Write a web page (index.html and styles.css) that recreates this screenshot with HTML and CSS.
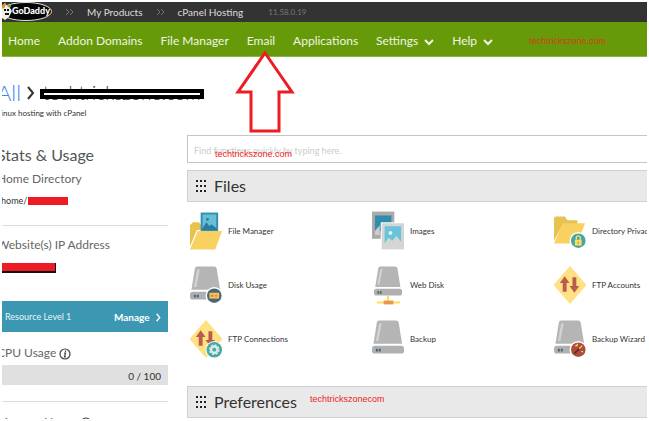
FILE: index.html
```html
<!DOCTYPE html>
<html lang="en">
<head>
<meta charset="utf-8">
<title>cPanel Hosting</title>
<link rel="stylesheet" href="styles.css">
</head>
<body>
<svg class="defs" aria-hidden="true">
  <symbol id="drive" viewBox="0 0 34 40">
    <path d="M7 1H25Q27 1 27.500 3L31 25H1.500L5 3Q5.500 1 7 1Z" fill="#b5b5b5"/>
    <path d="M7.500 4H10L6.500 22H4Z" fill="#d3d3d3"/>
    <rect x="0" y="27" width="33" height="8" rx="3" fill="#b0b0b0"/>
    <path d="M4 30h2v3h-2zM7 30h2v3h-2z" fill="#456477"/>
  </symbol>
  <symbol id="arrows" viewBox="0 0 34 40">
    <path d="M16.500 1 33 20 16.500 39 0 20Z" fill="#ffe082" stroke="#ffe082" stroke-linejoin="round"/>
    <path d="M11 11 16 18H13V27H9V18H6ZM19 12H23V21H26L21 28 16 21H19Z" fill="#b85c4c"/>
  </symbol>
  <symbol id="chevron-down" viewBox="0 0 10 8"><path d="M1 2 5 6 9 2" fill="none" stroke="currentColor" stroke-width="2"/></symbol>
  <symbol id="chevron-right" viewBox="0 0 8 14"><path d="M1 1 6 7 1 13" fill="none" stroke="currentColor" stroke-width="2"/></symbol>
  <symbol id="grip" viewBox="0 0 10 12"><path d="M0 0h2v2H0zM4 0h2v2H4zM8 0h2v2H8zM0 5h2v2H0zM4 5h2v2H4zM8 5h2v2H8zM0 10h2v2H0zM4 10h2v2H4zM8 10h2v2H8z" fill="#222"/></symbol>
  <symbol id="info" viewBox="0 0 12 12"><circle cx="6" cy="6" r="5" fill="none" stroke="#444" stroke-width="1.200"/><path d="M6.500 2.500v1.500M5 5h1.500L5.500 9H7" fill="none" stroke="#444" stroke-width="1.200"/></symbol>
</svg>
<div class="frame">
  <header>
    <div class="topbar">
      <a class="logo" href="#"><svg viewBox="0 0 52 20" aria-hidden="true">
        <ellipse cx="24" cy="9.500" rx="25.500" ry="9" fill="#050505" stroke="#ddd"/>
        <path d="M0 4 3 1 5 4 9 2 8 6 10 9 7 15 3 18 0 16Z" fill="#eee"/>
        <path d="M0 3 4 1 3 5 0 7Z" fill="#e58a1c"/>
        <path d="M5 4 9 2 8 6Z" fill="#6fae22"/>
        <path d="M2 8h2M5 8h2M3 12h4" stroke="#111" stroke-width="2"/>
      </svg><span>GoDaddy</span></a>
      <svg class="double" viewBox="0 0 9 8" aria-hidden="true"><path d="M1 1 4 4 1 7M5 1 8 4 5 7"/></svg>
      <a href="#">My Products</a>
      <svg class="double" viewBox="0 0 9 8" aria-hidden="true"><path d="M1 1 4 4 1 7M5 1 8 4 5 7"/></svg>
      <a href="#">cPanel Hosting</a>
      <span class="version">11.58.0.19</span>
    </div>
    <nav class="menu">
      <a href="#">Home</a>
      <a href="#">Addon Domains</a>
      <a href="#">File Manager</a>
      <a href="#">Email</a>
      <a href="#">Applications</a>
      <a href="#">Settings <svg><use href="#chevron-down"/></svg></a>
      <a href="#">Help <svg><use href="#chevron-down"/></svg></a>
    </nav>
  </header>
  <div class="heading">
    <h1><a href="#">All</a><svg><use href="#chevron-right"/></svg><span class="struck">techtrickszone.com</span></h1>
    <p>Linux hosting with cPanel</p>
  </div>
  <div class="columns">
    <aside>
      <h2>Stats &amp; Usage</h2>
      <h3>Home Directory</h3>
      <p class="path">/home/<span class="redacted"></span></p>
      <hr>
      <h3>Website(s) IP Address</h3>
      <p><span class="redacted address"></span></p>
      <a class="resource" href="#"><span>Resource Level 1</span><strong>Manage <svg><use href="#chevron-right"/></svg></strong></a>
      <h3>CPU Usage <svg><use href="#info"/></svg></h3>
      <div class="meter">0 / 100</div>
      <hr>
      <h3>Memory Usage <svg><use href="#info"/></svg></h3>
    </aside>
    <main>
      <input class="search" type="text" aria-label="Find functions" placeholder="Find functions quickly by typing here.">
      <h2 class="panel"><svg><use href="#grip"/></svg>Files</h2>
      <div class="apps">
        <a href="#"><svg viewBox="0 0 34 40"><path d="M0 36V14L3 11H9L12 14H28V19H7Z" fill="#e8c251"/><path d="M11 1H29V21H11Z" fill="#358ead"/><path d="M13 3H27V17H13Z" fill="#67bfd6"/><path d="M13 17 17 11 20 15 22 13 27 17V19H13Z" fill="#287c9d"/><circle cx="18" cy="8" r="1.500" fill="#287c9d"/><path d="M8 20H33L26 39H0Z" fill="#f8d160"/></svg>File Manager</a>
        <a href="#"><svg viewBox="0 0 34 40"><path d="M0 0H23V28H0Z" fill="#aaa"/><path d="M3 4H20V20H3Z" fill="#328cac"/><path d="M3 20 8 14V24H3Z" fill="#ccc"/><path d="M9 11H33V40H9Z" fill="#fff"/><path d="M10 12H33V39H10Z" fill="#d5d5d5"/><path d="M13 15H30V31L25 25 21 30 17 27 13 33Z" fill="#68c4db"/><circle cx="19" cy="22" r="2" fill="#eee"/></svg>Images</a>
        <a href="#"><svg viewBox="0 0 34 40"><path d="M0 30V7Q0 5 2 5H11L14 9H24V15H8Z" fill="#e8c251"/><path d="M9 12H32L24 33H0Z" fill="#f8d160"/><circle cx="25" cy="30" r="9" fill="#fff"/><circle cx="25" cy="30" r="7.500" fill="#43a6a4"/><path d="M23 29V27Q23 25 25 25T27 27V29" fill="none" stroke="#ffdb68" stroke-width="1.500"/><path d="M21.500 29H28.500V35H21.500Z" fill="#ffdb68"/><path d="M25 31v2" stroke="#b48b24"/></svg>Directory Privacy</a>
        <a href="#"><svg viewBox="0 0 34 40"><use href="#drive" width="34" height="40"/><circle cx="25" cy="31" r="9" fill="#fff"/><circle cx="25" cy="31" r="7.500" fill="#4b6879"/><path d="M20 28H30V34H20Z" fill="#f8c458"/><path d="M21.500 30h3v2h-3zM26 30h2v2h-2z" fill="#e98240"/></svg>Disk Usage</a>
        <a href="#"><svg viewBox="0 0 34 40"><g transform="translate(2 0) scale(.88)"><use href="#drive" width="34" height="40"/></g><path d="M16.500 31V37M5 38H29" stroke="#ffdc5c" stroke-width="2"/><path d="M12 36H22V40H12Z" fill="#e9974b"/></svg>Web Disk</a>
        <a href="#"><svg><use href="#arrows"/></svg>FTP Accounts</a>
        <a href="#"><svg viewBox="0 0 34 40"><use href="#arrows" width="34" height="40"/><circle cx="25" cy="31" r="9" fill="#fff"/><circle cx="25" cy="31" r="8" fill="#47a9a4"/><circle cx="25" cy="31" r="4.500" fill="#dce9e8" stroke="#dce9e8" stroke-width="2" stroke-dasharray="2 1.500"/><circle cx="25" cy="31" r="2" fill="#47a9a4"/></svg>FTP Connections</a>
        <a href="#"><svg><use href="#drive"/></svg>Backup</a>
        <a href="#"><svg viewBox="0 0 34 40"><use href="#drive" width="34" height="40"/><circle cx="25" cy="31" r="9" fill="#fff"/><circle cx="25" cy="31" r="7.500" fill="#ae4c3c"/><path d="M21 35 28 28" stroke="#702e28" stroke-width="2"/><path d="M26 30 29 27M22 27h2M24 25v2M28 33h2" stroke="#ffcf63" stroke-width="1.500"/></svg>Backup Wizard</a>
      </div>
      <h2 class="panel"><svg><use href="#grip"/></svg>Preferences</h2>
    </main>
  </div>
  <svg class="pointer" viewBox="0 0 62 84" aria-hidden="true"><path d="M31 4 58 43H45V82H17V43H4Z"/></svg>
  <span class="mark mark-nav">techtrickszone.com</span>
  <span class="mark mark-search">techtrickszone.com</span>
  <span class="mark mark-panel">techtrickszonecom</span>
</div>
</body>
</html>
```
FILE: styles.css
```css
*, *::after { box-sizing: border-box; }
body {
  margin: 0;
  padding: 2px;
  height: 100vh;
  background: #fff;
  color: #333;
  font: 8px/16px Lato, "Open Sans", sans-serif;
}
a { color: inherit; text-decoration: none; }
h1, h2, h3, p { margin: 0; font-weight: 400; }
.defs { position: absolute; width: 0; height: 0; }
.frame { position: relative; height: 100%; overflow: hidden; }

.topbar {
  display: flex;
  align-items: center;
  gap: 13px;
  height: 20px;
  background: #333;
  color: #ddd;
  font-size: 10px;
  white-space: nowrap;
}
.logo { position: relative; flex: none; width: 50px; height: 20px; }
.logo svg { width: 52px; height: 20px; }
.logo span {
  position: absolute;
  left: 10px;
  top: 1px;
  color: #fff;
  font-size: 9px;
  font-weight: 900;
}
.double { width: 9px; height: 8px; flex: none; fill: none; stroke: #777; }
.version { margin-left: 12px; color: #777; font-size: 8px; }

.menu {
  display: flex;
  align-items: center;
  gap: 18px;
  height: 35px;
  padding: 3px 6px 0;
  background: #669a09;
  border-bottom: 1px solid #8bb547;
  color: #f0f5e6;
  font-size: 12px;
  white-space: nowrap;
}
.menu svg { width: 10px; height: 8px; margin-left: 3px; vertical-align: -1px; }

.heading { height: 78px; padding-top: 22px; margin-left: -5px; }
h1 { display: flex; align-items: center; height: 28px; font-size: 22px; line-height: 28px; font-weight: 300; }
h1 a { color: #4385ee; }
h1 svg { width: 8px; height: 14px; margin: 0 5px 0 6px; }
.struck { position: relative; padding: 0 3px; font-size: 19px; color: #333; }
.struck::after {
  content: "";
  position: absolute;
  inset: 10px 0 auto;
  height: 10px;
  border: 4px solid #000;
  background: #fff;
}
.heading p { line-height: 12px; }

.columns { display: grid; grid-template-columns: 171px minmax(480px, 1fr); gap: 19px; margin-left: -5px; }
aside { padding-top: 8px; }
aside h2 { font-size: 16px; line-height: 24px; color: #555; }
aside h3 { font-size: 12px; line-height: 24px; color: #666; }
aside h3 svg { width: 12px; height: 12px; vertical-align: -3px; }
.path { display: flex; align-items: center; gap: 1px; height: 20px; font-size: 9px; }
.redacted { display: block; width: 40px; height: 8px; background: #ed1c24; }
.address { width: 59px; height: 10px; border: solid #111; border-width: 0 1px 2px 0; margin-top: 6px; }
hr { height: 1px; margin: 14px 0 7px; border: 0; background: #ddd; }
.resource {
  display: flex;
  justify-content: space-between;
  align-items: center;
  height: 31px;
  margin: 28px 0 9px;
  padding: 0 7px 0 8px;
  background: #3c97b2;
  color: #e7f3f6;
  font-size: 9px;
}
.resource strong { color: #fff; font-size: 10px; }
.resource svg { width: 5px; height: 9px; margin-left: 4px; vertical-align: -1px; }
.meter { height: 20px; padding: 3px 7px; background: #e0e0e0; font-size: 10px; text-align: right; }
.meter + hr { margin: 16px 0 8px; }

.search {
  display: block;
  width: 100%;
  height: 28px;
  padding: 2px 6px 0;
  border: 1px solid #c5c5c5;
  font: inherit;
  font-size: 9px;
}
.search::placeholder { color: #ccc; }
.panel {
  display: flex;
  align-items: center;
  gap: 8px;
  height: 32px;
  margin-top: 7px;
  padding: 0 8px;
  border: 1px solid #cdd1d3;
  background: #e9e9e9;
  color: #333;
  font-size: 16px;
}
.panel svg { width: 10px; height: 12px; }
.apps {
  display: grid;
  grid-template-columns: repeat(3, 182px);
  grid-auto-rows: 54px;
  padding: 2px 0 0 3px;
  height: 177px;
}
.apps a { display: flex; align-items: center; gap: 5px; white-space: nowrap; }
.apps svg { width: 33px; height: 40px; flex: none; }

.pointer { position: absolute; left: 232px; top: 47px; width: 62px; height: 84px; fill: #fff; stroke: #ed1c24; stroke-width: 3px; }
.mark { position: absolute; color: #ed1c24; font: 9px/12px "Liberation Sans", sans-serif; }
.mark-nav { left: 527px; top: 33px; color: #d53a18; }
.mark-search { left: 213px; top: 146px; }
.mark-panel { left: 308px; top: 391px; }
```
